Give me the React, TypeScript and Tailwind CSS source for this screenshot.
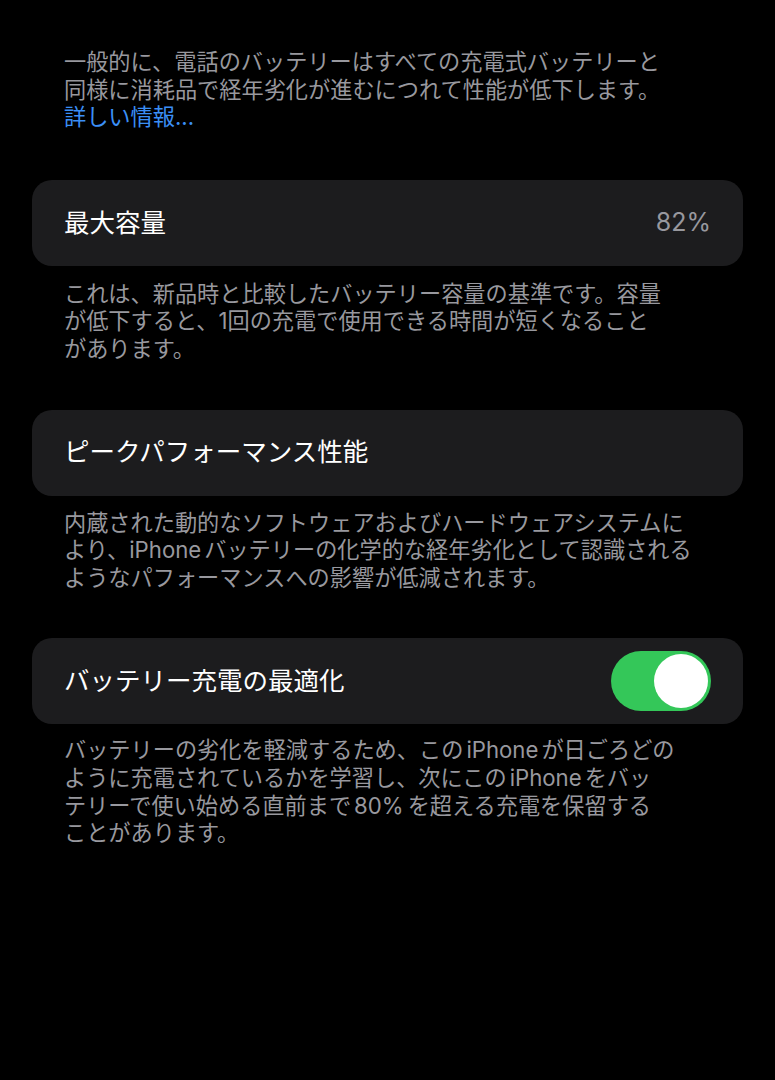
import React, { useState } from 'react';

const FONT = "font-['Inter','Noto_Sans_CJK_JP',sans-serif]";

// thin gap between Latin words and kana, as iOS does
const Latin: React.FC<{ children: React.ReactNode }> = ({ children }) => (
  <span className="mx-[3px]">{children}</span>
);

const Footer: React.FC<{ lines: React.ReactNode[]; className?: string }> = ({ lines, className = '' }) => (
  <div className={`px-8 text-[22.2px] leading-[27.6px] text-[#98989e] ${className}`}>
    {lines.map((line, i) => (
      <div key={i} className="whitespace-nowrap">{line}</div>
    ))}
  </div>
);

const Toggle: React.FC<{ on: boolean; onChange: () => void }> = ({ on, onChange }) => (
  <button
    onClick={onChange}
    className={`flex h-[60px] w-[100px] items-center rounded-full p-[3px] ${
      on ? 'justify-end bg-[#34c759]' : 'justify-start bg-[#39393d]'
    }`}
  >
    <span className="h-[54px] w-[54px] rounded-full bg-white" />
  </button>
);

export default function App() {
  const [optimized, setOptimized] = useState(true);

  return (
    <div className={`min-h-[1080px] w-[775px] bg-black px-8 pt-[48px] ${FONT}`}>
      {/* Intro */}
      <Footer
        lines={[
          '一般的に、電話のバッテリーはすべての充電式バッテリーと',
          '同様に消耗品で経年劣化が進むにつれて性能が低下します。',
          <span className="text-[#3b8ff6]">詳しい情報...</span>,
        ]}
      />

      {/* Max capacity */}
      <div className="mt-[49px] flex h-[86px] items-center justify-between rounded-[20px] bg-[#1c1c1e] px-8">
        <span className="text-[25.5px] text-white">最大容量</span>
        <span className="text-[25px] text-[#98989e]">82%</span>
      </div>
      <Footer
        className="mt-[14px]"
        lines={[
          'これは、新品時と比較したバッテリー容量の基準です。容量',
          'が低下すると、1回の充電で使用できる時間が短くなること',
          'があります。',
        ]}
      />

      {/* Peak performance */}
      <div className="mt-[47px] flex h-[86px] items-center rounded-[20px] bg-[#1c1c1e] px-8">
        <span className="text-[25.5px] text-white">ピークパフォーマンス性能</span>
      </div>
      <Footer
        className="mt-[13px]"
        lines={[
          '内蔵された動的なソフトウェアおよびハードウェアシステムに',
          <>より、<span className="mr-[3px]">iPhone</span>バッテリーの化学的な経年劣化として認識される</>,
          'ようなパフォーマンスへの影響が低減されます。',
        ]}
      />

      {/* Optimized charging */}
      <div className="mt-[47px] flex h-[86px] items-center justify-between rounded-[20px] bg-[#1c1c1e] px-8">
        <span className="text-[25.5px] text-white">バッテリー充電の最適化</span>
        <Toggle on={optimized} onChange={() => setOptimized(!optimized)} />
      </div>
      <Footer
        className="mt-[12px]"
        lines={[
          <>バッテリーの劣化を軽減するため、この<Latin>iPhone</Latin>が日ごろどの</>,
          <>ように充電されているかを学習し、次にこの<Latin>iPhone</Latin>をバッ</>,
          <>テリーで使い始める直前まで<span className="ml-[3px] mr-[4px]">80%</span>を超える充電を保留する</>,
          'ことがあります。',
        ]}
      />
    </div>
  );
}
